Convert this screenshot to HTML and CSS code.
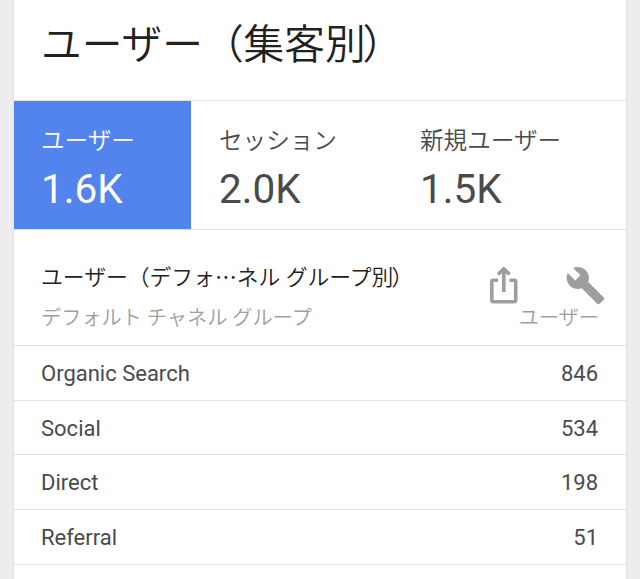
FILE: index.html
```html
<!DOCTYPE html>
<html lang="ja">
<head>
    <meta charset="UTF-8">
    <meta name="viewport" content="width=device-width, initial-scale=1.0">
    <title>ユーザー（集客別）</title>
    <link rel="stylesheet" href="styles.css">
</head>
<body>
    <div class="card">
        <h1>ユーザー（集客別<span class="paren">）</span></h1>

        <!-- 指標タブ -->
        <div class="metrics">
            <div class="metric active">
                <div class="metric-label">ユーザー</div>
                <div class="metric-value">1.6K</div>
            </div>
            <div class="metric sessions">
                <div class="metric-label">セッション</div>
                <div class="metric-value">2.0K</div>
            </div>
            <div class="metric">
                <div class="metric-label">新規ユーザー</div>
                <div class="metric-value">1.5K</div>
            </div>
        </div>

        <div class="table-header">
            <div class="heading">
                <h2>ユーザー（デフォ⋯ネル グループ別<span class="paren">）</span></h2>
                <div class="icons">
                    <svg class="share" width="30" height="40" viewBox="0 0 30 40" fill="none" stroke="#9e9e9e" stroke-width="3.6">
                        <path d="M9 15.3H4.3Q2.8 15.3 2.8 16.8V35.2Q2.8 36.7 4.3 36.7H25.2Q26.7 36.7 26.7 35.2V16.8Q26.7 15.3 25.2 15.3H20.5"/>
                        <path d="M14.8 27V4.5M9 9.5L14.8 3.7L20.6 9.5"/>
                    </svg>
                    <svg class="wrench" width="41" height="41" viewBox="0 0 24 24" fill="#9e9e9e">
                        <path d="M22.7 19l-9.1-9.1c.9-2.3.4-5-1.5-6.9-2-2-5-2.4-7.4-1.3L9 6 6 9 1.6 4.7C.4 7.1.9 10.1 2.9 12.1c1.9 1.9 4.6 2.4 6.9 1.5l9.1 9.1c.4.4 1 .4 1.4 0l2.3-2.3c.5-.4.5-1.1.1-1.4z"/>
                    </svg>
                </div>
            </div>
            <div class="columns">
                <span>デフォルト チャネル グループ</span>
                <span>ユーザー</span>
            </div>
        </div>

        <div class="rows">
            <div class="row"><span>Organic Search</span><span>846</span></div>
            <div class="row"><span>Social</span><span>534</span></div>
            <div class="row"><span>Direct</span><span>198</span></div>
            <div class="row"><span>Referral</span><span>51</span></div>
        </div>
    </div>
</body>
</html>
```
FILE: styles.css
```css
* {
    box-sizing: border-box;
}
body {
    margin: 0;
    padding: 0 13px;
    height: 579px;
    overflow: hidden;
    background-color: #ededed;
    font-family: Roboto, "Noto Sans CJK JP", sans-serif;
    color: #4a4a4a;
}
.card {
    height: 579px;
    background: #fff;
    border-left: 1px solid #e2e2e2;
    border-right: 1px solid #e2e2e2;
}
h1 {
    height: 100px;
    margin: 0;
    padding: 15px 27px 0;
    font-size: 40.7px;
    font-weight: 350;
    line-height: 60px;
    color: #212121;
    white-space: nowrap;
}
/* 閉じ括弧を前の文字に寄せる */
.paren {
    margin-left: -0.08em;
}
.metrics {
    display: flex;
    height: 130px;
    border-top: 1px solid #e2e2e2;
    border-bottom: 1px solid #e2e2e2;
}
.metric {
    padding: 24px 28px 0;
}
.metric.active {
    width: 177px;
    padding-left: 27px;
    background: #5383ec;
    color: #fff;
}
.metric.sessions {
    width: 201px;
}
.metric-label {
    font-size: 23.6px;
    font-weight: 350;
    line-height: 32px;
    white-space: nowrap;
}
.metric-value {
    margin-top: 7px;
    font-size: 40.5px;
    line-height: 50px;
}
.table-header {
    height: 116px;
    padding: 28px 27px 0;
    border-bottom: 1px solid #e2e2e2;
}
.heading {
    display: flex;
    justify-content: space-between;
    height: 46px;
}
h2 {
    margin: 0;
    font-size: 21.8px;
    font-weight: 350;
    line-height: 39px;
    color: #212121;
    white-space: nowrap;
}
.icons {
    display: flex;
    gap: 46px;
    margin: 7px -7px 0 0;
    height: 41px;
}
.columns {
    display: flex;
    justify-content: space-between;
    font-size: 20.2px;
    font-weight: 350;
    line-height: 29px;
    color: #9e9e9e;
}
.row {
    display: flex;
    justify-content: space-between;
    height: 54.67px;
    padding: 0 28px 0 27px;
    border-bottom: 1px solid #e2e2e2;
    font-size: 22px;
    line-height: 56px;
}
```
